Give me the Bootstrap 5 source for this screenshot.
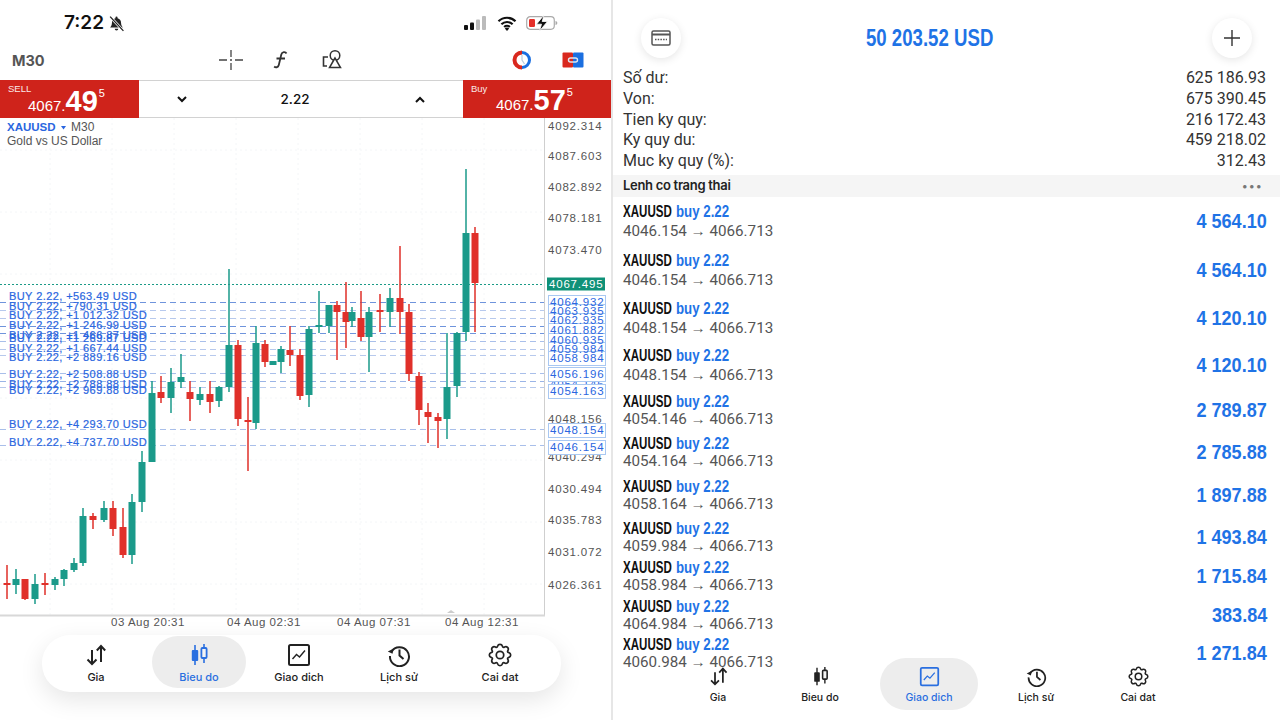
<!DOCTYPE html>
<html lang="en">
<head>
<meta charset="UTF-8">
<meta name="viewport" content="width=device-width, initial-scale=1.0">
<title>XAUUSD M30</title>
<link href="https://cdn.jsdelivr.net/npm/bootstrap@5.3.0/dist/css/bootstrap.min.css" rel="stylesheet">
<style>
body { width: 1280px; height: 720px; overflow: hidden; background: #fff; font-family: Inter, "Liberation Sans", sans-serif; color: #222; }
.chart-side { width: 613px; height: 720px; border-right: 2px solid #e6e6e6; flex-shrink: 0; }
.acct-side { width: 667px; height: 720px; flex-shrink: 0; }

.status-row { height: 42px; padding-top: 4px; }
.clock { margin-left: 64px; font-size: 19px; font-weight: 600; line-height: 26px; color: #111; }
.status-icons { margin-right: 53px; gap: 9px; }
.tool-row { height: 38px; }
.tf-label { position: absolute; left: 12px; top: 50px; font-size: 14.5px; font-weight: 700; color: #555; }
.tool-icon { position: absolute; top: 49px; }
.ti-cross { left: 219px; } .ti-func { left: 271px; } .ti-obj { left: 322px; } .ti-color { left: 511px; } .ti-link { left: 562px; }

.trade-row { height: 38px; }
.quote-box { width: 139px; background: #cf231b; color: #fff; font-family: "Liberation Sans", sans-serif; line-height: 1; }
.quote-box.quote-buy { width: 148px; }
.quote-name { font-size: 9.5px; padding: 4px 0 0 8px; opacity: .9; }
.quote-price { padding-left: 28px; margin-top: -7px; font-size: 15px; white-space: nowrap; }
.quote-buy .quote-price { padding-left: 33px; margin-top: -8px; }
.quote-big { font-size: 29px; font-weight: 700; }
.quote-sup { font-size: 11px; vertical-align: 14px; margin-left: 1px; }
.lot-ctrl { font-size: 13.5px; font-weight: 500; color: #111; padding: 0 38px; border-top: 1px solid #d2d2d2; border-bottom: 1px solid #d2d2d2; }
.lot-val { margin-right: 12px; }

.chart-svg { display: block; width: 610px; height: 514px; }
.ax { font: 11.5px "Liberation Sans", sans-serif; letter-spacing: .8px; fill: #555; }
.ax-date { letter-spacing: .5px; }
.ax-blue { fill: #2a66e0; }
.ax-white { fill: #fff; }
.buy-lbl { font: 11px "Liberation Sans", sans-serif; letter-spacing: .42px; fill: #2a66e0; stroke: #2a66e0; stroke-width: .2px; }
.sym-lbl { font: 700 11.5px "Liberation Sans", sans-serif; fill: #2a66e0; }
.sym-txt { font: 12px "Liberation Sans", sans-serif; fill: #555; }

.float-tabs { position: absolute; left: 42px; top: 635px; width: 519px; height: 57px; border-radius: 28px; background: #fff; box-shadow: 0 8px 24px rgba(0,0,0,.1); padding-top: 1px; }
.tab-item { display: flex; flex-direction: column; align-items: center; justify-content: flex-start; font-size: 11px; font-weight: 500; color: #222; line-height: 13px; flex-shrink: 0; }
.float-tabs .tab-item { height: 52px; padding-top: 7px; border-radius: 26px; gap: 4px; }
.float-tabs .tab-item:nth-child(1), .float-tabs .tab-item:nth-child(5) { width: 108px; }
.float-tabs .tab-item:nth-child(2) { width: 94px; margin-left: 2px; }
.float-tabs .tab-item:nth-child(3) { width: 106px; }
.float-tabs .tab-item:nth-child(4) { width: 94px; }
.tab-on { background: #ededed; color: #2a6fe0; }

.head-row { height: 67px; padding: 18px 28px 0 28px; }
.round-btn { width: 40px; height: 40px; border-radius: 50%; background: #fff; box-shadow: 0 2px 8px rgba(0,0,0,.1); }
.narrow { font-family: "Liberation Sans", sans-serif; }
.equity-val { font-size: 23px; font-weight: 700; color: #1f73e6; line-height: 40px; transform: scaleX(.81); margin-right: 34px; }
.sum-list { padding: 1px 14px 0 10px; height: 108px; font-family: Roboto, "Liberation Sans", sans-serif; font-size: 16px; color: #333; }
.sum-list > div { height: 20.75px; line-height: 20.75px; }
.sect-band { height: 22px; background: #f5f5f5; padding: 0 17px 0 10px; font-size: 13px; font-weight: 600; letter-spacing: -.3px; color: #222; }
.more-dots { font-size: 11px; letter-spacing: 1.5px; color: #777; line-height: 1; }

.pos-list { height: 470px; overflow: hidden; padding-top: 5px; }
.pos-list .list-group-item { padding: 0 13px 0 10px; border: 0; background: transparent; flex-shrink: 0; }
.h49 { height: 49px; } .h48 { height: 48px; } .h47 { height: 47px; } .h46 { height: 46px; }
.h43 { height: 43px; } .h42 { height: 42px; } .h39 { height: 39px; } .h38 { height: 38px; }
.pos-title { font-size: 16.5px; font-weight: 700; color: #111; line-height: 18px; white-space: nowrap; }
.pos-sym { display: inline-block; width: 53px; transform: scaleX(.7); transform-origin: left center; }
.pos-side { display: inline-block; font-size: 16px; color: #1f73e6; transform: scaleX(.83); transform-origin: left center; }
.pos-rate { font-family: Roboto, "Liberation Sans", sans-serif; font-size: 15.2px; color: #555; line-height: 18px; margin-top: 1px; white-space: nowrap; }
.h43 .pos-rate, .h42 .pos-rate, .h39 .pos-rate, .h38 .pos-rate { margin-top: -1px; }
.pos-profit { font-size: 21px; font-weight: 700; color: #1f73e6; transform: scaleX(.86); transform-origin: right center; }

.acct-tabs { position: absolute; left: 0; top: 658px; width: 667px; height: 62px; background: linear-gradient(transparent 9px, #fff 9px); padding-left: 55px; }
.acct-tabs .tab-item { height: 52px; padding-top: 8px; gap: 4px; border-radius: 26px; font-size: 10.5px; }
.acct-tabs .tab-item:nth-child(1) { width: 100px; }
.acct-tabs .tab-item:nth-child(2) { width: 104px; }
.acct-tabs .tab-item:nth-child(3) { width: 98px; margin-left: 8px; }
.acct-tabs .tab-item:nth-child(4) { width: 116px; }
.acct-tabs .tab-item:nth-child(5) { width: 88px; }
</style>
</head>
<body>
<svg width="0" height="0" class="d-block">
  <defs>
    <symbol id="i-quote" viewBox="0 0 24 24"><path d="M8 7v14M3.500 16.500 8 21l4.500-4.500M17 19V3M12.800 7.500 17 3l4.200 4.500" fill="none" stroke="currentColor" stroke-width="2"/></symbol>
    <symbol id="i-chart" viewBox="0 0 24 24"><path d="M8 2v20M17 1v19" stroke="currentColor" stroke-width="1.600"/><rect x="4.800" y="7" width="6.400" height="11" rx="1" fill="currentColor"/><rect x="14.400" y="5" width="5.200" height="10" rx="1" fill="#f4f4f4" stroke="currentColor" stroke-width="1.800"/></symbol>
    <symbol id="i-trade" viewBox="0 0 24 24"><rect x="2" y="2" width="20" height="20" rx="1.500" fill="none" stroke="currentColor" stroke-width="2"/><path d="m5.500 16 4-4.500 3 2.500 5.500-6.500" fill="none" stroke="currentColor" stroke-width="1.400"/></symbol>
    <symbol id="i-hist" viewBox="0 0 24 24"><path d="M4.500 8.500A9.500 9.500 0 1 1 3 13" fill="none" stroke="currentColor" stroke-width="2"/><path d="M.800 8.500 5.500 10.800 6.800 5.500z" fill="currentColor"/><path d="M12.500 6.500V12.500l4 3.500" fill="none" stroke="currentColor" stroke-width="2"/></symbol>
    <symbol id="i-gear" viewBox="-1 -1 18 18"><path d="M9.796 1.343c-.527-1.790-3.065-1.790-3.592 0l-.094.319a.873.873 0 0 1-1.255.520l-.292-.160c-1.640-.892-3.433.902-2.540 2.541l.159.292a.873.873 0 0 1-.520 1.255l-.319.094c-1.790.527-1.790 3.065 0 3.592l.319.094a.873.873 0 0 1 .520 1.255l-.160.292c-.892 1.640.901 3.434 2.541 2.540l.292-.159a.873.873 0 0 1 1.255.520l.094.319c.527 1.790 3.065 1.790 3.592 0l.094-.319a.873.873 0 0 1 1.255-.520l.292.160c1.640.893 3.434-.902 2.540-2.541l-.159-.292a.873.873 0 0 1 .520-1.255l.319-.094c1.790-.527 1.790-3.065 0-3.592l-.319-.094a.873.873 0 0 1-.520-1.255l.160-.292c.893-1.640-.902-3.433-2.541-2.540l-.292.159a.873.873 0 0 1-1.255-.520l-.094-.319z" fill="none" stroke="currentColor" stroke-width="1.300"/><circle cx="8" cy="8" r="2.800" fill="none" stroke="currentColor" stroke-width="1.300"/></symbol>
  </defs>
</svg>

<div class="d-flex">
  <!-- left: chart -->
  <div class="chart-side position-relative">
    <div class="status-row d-flex justify-content-between">
      <div class="d-flex align-items-center gap-1">
        <span class="clock">7:22</span>
        <svg width="17" height="17" viewBox="0 0 16 16"><path d="M8 1.500a1 1 0 0 1 1 1v.500c2.300.500 3.300 2.300 3.300 4.500 0 2 1 3.300 1.700 4.300H2c.700-1 1.700-2.300 1.700-4.300C3.700 5.300 4.700 3.500 7 3v-.500a1 1 0 0 1 1-1zM6.300 13h3.400a1.700 1.700 0 0 1-3.400 0z" fill="#222"/><path d="M2 1.500 14.500 15" stroke="#fff" stroke-width="2.500"/><path d="M2 1.500 14.500 15" stroke="#222" stroke-width="1.200"/></svg>
      </div>
      <div class="status-icons d-flex align-items-center">
        <svg width="24" height="14" viewBox="0 0 24 14"><rect x="0" y="9" width="4" height="5" rx="1" fill="#111"/><rect x="6" y="6.500" width="4" height="7.500" rx="1" fill="#111"/><rect x="12" y="3.500" width="4" height="10.500" rx="1" fill="#bbb"/><rect x="18" y="0" width="4" height="14" rx="1" fill="#bbb"/></svg>
        <svg width="20" height="15" viewBox="0 0 20 15"><path d="M1.500 5.300a12 12 0 0 1 17 0M4.400 8.300a8 8 0 0 1 11.200 0M7.200 11a4 4 0 0 1 5.600 0" fill="none" stroke="#111" stroke-width="2.200"/><path d="M10 15 7.800 12.600a3 3 0 0 1 4.400 0z" fill="#111"/></svg>
        <svg width="32" height="16" viewBox="0 0 32 16"><rect x=".7" y="1.700" width="27.600" height="12.600" rx="3.500" fill="none" stroke="#aaa" stroke-width="1.200"/><rect x="3" y="4" width="6" height="8" rx="1.200" fill="#e5302a"/><path d="M29.500 6v4c1.200-.3 1.800-1 1.800-2s-.6-1.700-1.800-2z" fill="#aaa"/><path d="M18 0 10.500 9.200h5L13.500 16l8-9.500h-5.300z" fill="#111" stroke="#fff" stroke-width=".8"/></svg>
      </div>
    </div>
    <div class="tool-row"></div>
    <span class="tf-label">M30</span>
    <svg class="tool-icon ti-cross" width="24" height="22" viewBox="0 0 24 22"><path d="M0 11h8M16 11h8M12 1v7M12 14v7M11 11h2" stroke="#444" stroke-width="1.300" fill="none"/></svg>
    <svg class="tool-icon ti-func" width="20" height="22" viewBox="0 0 20 22"><path d="M15.500 4.500c-1-2-4.500-2-5.200 1L7.800 16c-.7 2.700-3.300 2.800-4.600 1.500M5.500 9.500h8.500" fill="none" stroke="#333" stroke-width="1.800"/></svg>
    <svg class="tool-icon ti-obj" width="22" height="22" viewBox="0 0 22 22"><path d="M6 8H1.500v9H5" fill="none" stroke="#333" stroke-width="1.600"/><circle cx="13" cy="6.500" r="4.800" fill="none" stroke="#333" stroke-width="1.500"/><path d="M13 9 7.500 18.500h11z" fill="#fff" stroke="#333" stroke-width="1.500"/></svg>
    <svg class="tool-icon ti-color" width="22" height="22" viewBox="0 0 22 22"><path d="M11 3.500a7.500 7.500 0 0 0 0 15" fill="none" stroke="#d9281e" stroke-width="4"/><path d="M11 3.500a7.500 7.500 0 0 1 0 15" fill="none" stroke="#1b6fe0" stroke-width="3"/><path d="M11 6v5l2.500 4" fill="none" stroke="#bcd" stroke-width="1.200"/></svg>
    <svg class="tool-icon ti-link" width="22" height="22" viewBox="0 0 22 22"><rect x="0.500" y="3.500" width="10.500" height="15" rx="1" fill="#d9281e"/><rect x="11" y="3.500" width="10.500" height="15" rx="1" fill="#1b6fe0"/><rect x="6.500" y="9" width="9" height="4" rx="2" fill="none" stroke="#dfe6f0" stroke-width="1.400"/></svg>

    <div class="trade-row d-flex">
      <div class="quote-box">
        <div class="quote-name">SELL</div>
        <div class="quote-price">4067.<span class="quote-big">49</span><span class="quote-sup">5</span></div>
      </div>
      <div class="lot-ctrl flex-grow-1 d-flex align-items-center justify-content-between">
        <svg width="10" height="7" viewBox="0 0 10 7"><path d="m1 1 4 4 4-4" fill="none" stroke="#111" stroke-width="2"/></svg>
        <span class="lot-val">2.22</span>
        <svg width="10" height="7" viewBox="0 0 10 7"><path d="m1 6 4-4 4 4" fill="none" stroke="#111" stroke-width="2"/></svg>
      </div>
      <div class="quote-box quote-buy">
        <div class="quote-name">Buy</div>
        <div class="quote-price">4067.<span class="quote-big">57</span><span class="quote-sup">5</span></div>
      </div>
    </div>

    <svg id="chart" class="chart-svg" viewBox="0 118 610 514"></svg>

    <div class="float-tabs d-flex align-items-start">
      <div class="tab-item"><svg width="24" height="24"><use href="#i-quote"/></svg>Gia</div>
      <div class="tab-item tab-on"><svg width="24" height="24"><use href="#i-chart"/></svg>Bieu do</div>
      <div class="tab-item"><svg width="24" height="24"><use href="#i-trade"/></svg>Giao dich</div>
      <div class="tab-item"><svg width="24" height="24"><use href="#i-hist"/></svg>Lịch sử</div>
      <div class="tab-item"><svg width="24" height="24"><use href="#i-gear"/></svg>Cai dat</div>
    </div>
  </div>

  <!-- right: account -->
  <div class="acct-side position-relative">
    <div class="head-row d-flex justify-content-between">
      <div class="round-btn d-flex align-items-center justify-content-center">
        <svg width="20" height="16" viewBox="0 0 20 16"><rect x="1" y="1" width="18" height="14" rx="1.500" fill="none" stroke="#555" stroke-width="1.500"/><path d="M1 4.500h18" stroke="#555" stroke-width="2"/><path d="M4 9.500h12" stroke="#555" stroke-width="1.500" stroke-dasharray="1.500 1.200"/></svg>
      </div>
      <div class="equity-val narrow">50 203.52 USD</div>
      <div class="round-btn d-flex align-items-center justify-content-center">
        <svg width="16" height="16" viewBox="0 0 16 16"><path d="M8 0v16M0 8h16" stroke="#333" stroke-width="1.400"/></svg>
      </div>
    </div>
    <div class="sum-list">
      <div class="d-flex justify-content-between"><span>Số dư:</span><span>625 186.93</span></div>
      <div class="d-flex justify-content-between"><span>Von:</span><span>675 390.45</span></div>
      <div class="d-flex justify-content-between"><span>Tien ky quy:</span><span>216 172.43</span></div>
      <div class="d-flex justify-content-between"><span>Ky quy du:</span><span>459 218.02</span></div>
      <div class="d-flex justify-content-between"><span>Muc ky quy (%):</span><span>312.43</span></div>
    </div>
    <div class="sect-band d-flex justify-content-between align-items-center"><span>Lenh co trang thai</span><span class="more-dots">•••</span></div>

    <ul class="list-group list-group-flush pos-list">
      <li class="list-group-item h49"><div class="d-flex justify-content-between align-items-center"><div><div class="pos-title narrow"><span class="pos-sym">XAUUSD</span><span class="pos-side">buy 2.22</span></div><div class="pos-rate">4046.154 → 4066.713</div></div><div class="pos-profit narrow">4 564.10</div></div></li>
      <li class="list-group-item h48"><div class="d-flex justify-content-between align-items-center"><div><div class="pos-title narrow"><span class="pos-sym">XAUUSD</span><span class="pos-side">buy 2.22</span></div><div class="pos-rate">4046.154 → 4066.713</div></div><div class="pos-profit narrow">4 564.10</div></div></li>
      <li class="list-group-item h47"><div class="d-flex justify-content-between align-items-center"><div><div class="pos-title narrow"><span class="pos-sym">XAUUSD</span><span class="pos-side">buy 2.22</span></div><div class="pos-rate">4048.154 → 4066.713</div></div><div class="pos-profit narrow">4 120.10</div></div></li>
      <li class="list-group-item h46"><div class="d-flex justify-content-between align-items-center"><div><div class="pos-title narrow"><span class="pos-sym">XAUUSD</span><span class="pos-side">buy 2.22</span></div><div class="pos-rate">4048.154 → 4066.713</div></div><div class="pos-profit narrow">4 120.10</div></div></li>
      <li class="list-group-item h42"><div class="d-flex justify-content-between align-items-center"><div><div class="pos-title narrow"><span class="pos-sym">XAUUSD</span><span class="pos-side">buy 2.22</span></div><div class="pos-rate">4054.146 → 4066.713</div></div><div class="pos-profit narrow">2 789.87</div></div></li>
      <li class="list-group-item h43"><div class="d-flex justify-content-between align-items-center"><div><div class="pos-title narrow"><span class="pos-sym">XAUUSD</span><span class="pos-side">buy 2.22</span></div><div class="pos-rate">4054.164 → 4066.713</div></div><div class="pos-profit narrow">2 785.88</div></div></li>
      <li class="list-group-item h42"><div class="d-flex justify-content-between align-items-center"><div><div class="pos-title narrow"><span class="pos-sym">XAUUSD</span><span class="pos-side">buy 2.22</span></div><div class="pos-rate">4058.164 → 4066.713</div></div><div class="pos-profit narrow">1 897.88</div></div></li>
      <li class="list-group-item h39"><div class="d-flex justify-content-between align-items-center"><div><div class="pos-title narrow"><span class="pos-sym">XAUUSD</span><span class="pos-side">buy 2.22</span></div><div class="pos-rate">4059.984 → 4066.713</div></div><div class="pos-profit narrow">1 493.84</div></div></li>
      <li class="list-group-item h39"><div class="d-flex justify-content-between align-items-center"><div><div class="pos-title narrow"><span class="pos-sym">XAUUSD</span><span class="pos-side">buy 2.22</span></div><div class="pos-rate">4058.984 → 4066.713</div></div><div class="pos-profit narrow">1 715.84</div></div></li>
      <li class="list-group-item h38"><div class="d-flex justify-content-between align-items-center"><div><div class="pos-title narrow"><span class="pos-sym">XAUUSD</span><span class="pos-side">buy 2.22</span></div><div class="pos-rate">4064.984 → 4066.713</div></div><div class="pos-profit narrow">383.84</div></div></li>
      <li class="list-group-item h38"><div class="d-flex justify-content-between align-items-center"><div><div class="pos-title narrow"><span class="pos-sym">XAUUSD</span><span class="pos-side">buy 2.22</span></div><div class="pos-rate">4060.984 → 4066.713</div></div><div class="pos-profit narrow">1 271.84</div></div></li>
    </ul>

    <div class="acct-tabs d-flex align-items-start">
      <div class="tab-item"><svg width="21" height="21"><use href="#i-quote"/></svg>Gia</div>
      <div class="tab-item"><svg width="21" height="21"><use href="#i-chart"/></svg>Bieu do</div>
      <div class="tab-item tab-on"><svg width="21" height="21"><use href="#i-trade"/></svg>Giao dich</div>
      <div class="tab-item"><svg width="21" height="21"><use href="#i-hist"/></svg>Lịch sử</div>
      <div class="tab-item"><svg width="21" height="21"><use href="#i-gear"/></svg>Cai dat</div>
    </div>
  </div>
</div>

<script>
// [x, wickTop, wickBottom, bodyTop, bodyBottom, up]
const candles = [
  [7,565,599,583,585,0],[16,569,594,579,585,1],[25,579,600,579,599,0],[35,574,604,584,599,1],[45,573,595,583,585,0],
  [55,577,590,579,585,1],[64,569,586,570,579,1],[74,558,572,563,570,1],[83,508,566,516,563,1],[93,513,529,516,520,0],
  [104,501,522,508,520,1],[113,501,536,508,529,0],[123,508,558,527,555,0],[132,494,564,502,555,1],[142,451,512,462,502,1],
  [152,381,462,393,462,1],[161,376,403,392,398,0],[171,368,413,382,398,1],[181,354,388,377,382,1],[190,381,421,392,399,0],
  [200,387,405,394,400,1],[210,381,413,394,402,0],[219,386,407,387,401,1],[229,269,392,345,387,1],[238,340,426,345,419,0],
  [248,397,471,420,422,0],[256,326,429,343,423,1],[265,340,367,344,362,0],[273,361,365,361,365,1],[281,346,373,349,362,1],
  [290,326,366,350,355,0],[300,349,400,355,396,0],[309,326,407,329,395,1],[319,291,333,325,327,1],[329,305,333,305,326,1],
  [337,301,360,305,312,0],[346,282,348,312,322,0],[352,307,327,312,321,1],[361,291,341,318,337,0],[369,307,372,312,337,1],
  [380,294,332,310,312,0],[390,288,327,298,312,1],[400,246,334,298,312,0],[409,304,381,312,374,0],[419,372,425,376,410,0],
  [428,403,443,412,417,0],[438,413,448,417,421,0],[447,333,439,387,419,1],[457,332,397,333,386,1],[466,169,341,233,332,1],
  [475,227,332,233,283,0]
];
const dashLines = [[302,1],[310,.5],[318,.5],[326,1],[333,1],[341,.6],[349,.5],[355,.5],[373,.6],[381,.7],[387,.5],[429,.6],[445,.6]];
const buyLabels = [
  ["+563.49",300],["+790.31",310],["+1 012.32",319],["+1 246.99",329],["+1 466.87",339],["+1 269.87",342],
  ["+1 667.44",352],["+2 889.16",361],["+2 508.88",378],["+2 788.88",388],["+2 969.88",394],["+4 293.70",428],["+4 737.70",446]
];
const axisTop = [["4092.314",126],["4087.603",156],["4082.892",187],["4078.181",218],["4073.470",250],
  ["4048.156",419],["4040.294",457],["4030.494",489],["4035.783",520],["4031.072",552],["4026.361",585]];
const axisBlue = [["4064.932",302],["4063.935",311],["4062.935",320],["4061.882",330],["4060.935",340],["4059.984",349],["4058.984",358],
  ["4056.196",374],["4054.163",391],["4048.154",430],["4046.154",447]];
const dates = [["03 Aug 20:31",148],["04 Aug 02:31",264],["04 Aug 07:31",374],["04 Aug 12:31",482]];

let s = "";
// faint grid
for (let x = 50; x < 544; x += 62) s += `<path d="M${x} 118V615" stroke="#f4f6f8" stroke-width="1" stroke-dasharray="2 3"/>`;
for (let y = 150; y < 615; y += 62) s += `<path d="M0 ${y}H544" stroke="#f4f6f8" stroke-width="1" stroke-dasharray="2 3"/>`;
// open position lines
dashLines.forEach(l => { s += `<path d="M0 ${l[0]+.5}H545" stroke="#6f94dc" stroke-opacity="${l[1]}" stroke-dasharray="6 4"/>`; });
s += `<path d="M0 284.500H545" stroke="#1a9a86" stroke-dasharray="2 2"/>`;
// candles
candles.forEach(c => {
  const col = c[5] ? "#1b9a8a" : "#e0302a";
  s += `<rect x="${c[0]-.75}" y="${c[1]}" width="1.500" height="${c[2]-c[1]}" fill="${col}"/>`;
  s += `<rect x="${c[0]-3.5}" y="${c[3]}" width="7" height="${c[4]-c[3]}" fill="${col}"/>`;
});
// axis frame
s += `<path d="M544.500 118V615" stroke="#cfcfcf"/><path d="M0 615.500H545" stroke="#d8d8d8" stroke-width="2"/>`;
s += `<path d="M447 613l4-3 4 3z" fill="#ccc"/>`;
axisTop.forEach(a => { s += `<text class="ax" x="548" y="${a[1]+4}">${a[0]}</text>`; });
s += `<rect x="547" y="277.500" width="58" height="13" fill="#0f9178"/><text class="ax ax-white" x="549" y="288">4067.495</text>`;
// 4054.146 sits behind the 4054.163 box, only the top of its digits shows
s += `<text class="ax ax-blue" x="550" y="388">4054.146</text>`;
// blue boxes first, then their texts, so the stacked prices stay readable
axisBlue.forEach(a => { s += `<rect x="548.500" y="${a[1]-6.500}" width="57" height="14" fill="#fff" stroke="#a9c8f2"/>`; });
axisBlue.forEach(a => { s += `<text class="ax ax-blue" x="550" y="${a[1]+4}">${a[0]}</text>`; });
dates.forEach(d => { s += `<text class="ax ax-date" text-anchor="middle" x="${d[1]}" y="626">${d[0]}</text>`; });
buyLabels.forEach(b => { s += `<text class="buy-lbl" x="9" y="${b[1]}">BUY 2.22, ${b[0]} USD</text>`; });
s += `<text class="sym-lbl" x="7" y="131">XAUUSD</text><path d="M61 126h5l-2.500 3.500z" fill="#2a66e0"/><text class="sym-txt" x="71" y="131">M30</text>`;
s += `<text class="sym-txt" x="7" y="145">Gold vs US Dollar</text>`;
document.getElementById("chart").innerHTML = s;
</script>
<script src="https://cdn.jsdelivr.net/npm/bootstrap@5.3.0/dist/js/bootstrap.bundle.min.js"></script>
</body>
</html>
